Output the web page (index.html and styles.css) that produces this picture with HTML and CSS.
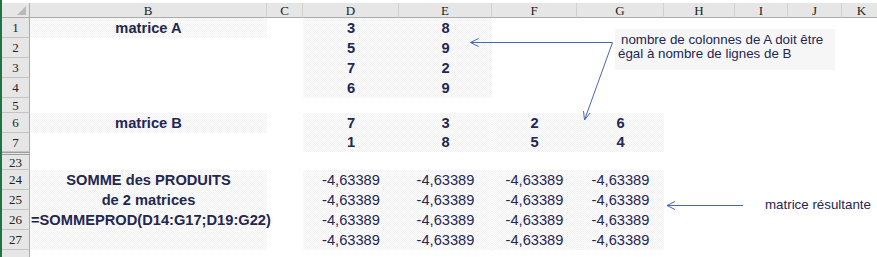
FILE: index.html
```html
<!DOCTYPE html>
<html lang="fr">
<head>
<meta charset="utf-8">
<title>Matrices</title>
<link rel="stylesheet" href="styles.css">
</head>
<body>
<div class="sheet">
  <div class="topstrip"></div>
  <div class="row hdr">
    <div class="corner"><span class="tri"></span></div>
    <div class="ch">B</div><div class="ch">C</div><div class="ch">D</div><div class="ch">E</div><div class="ch">F</div><div class="ch">G</div><div class="ch">H</div><div class="ch">I</div><div class="ch">J</div><div class="ch">K</div>
  </div>

  <div class="row h20">
    <div class="rh">1</div>
    <div class="c p b">matrice A</div><div class="c"></div>
    <div class="c p b">3</div><div class="c p b">8</div>
    <div class="c"></div><div class="c"></div><div class="c"></div><div class="c"></div><div class="c"></div><div class="c"></div>
  </div>
  <div class="row h20">
    <div class="rh">2</div>
    <div class="c"></div><div class="c"></div>
    <div class="c p b">5</div><div class="c p b">9</div>
    <div class="c"></div><div class="c"></div><div class="c"></div><div class="c"></div><div class="c"></div><div class="c"></div>
  </div>
  <div class="row h20">
    <div class="rh">3</div>
    <div class="c"></div><div class="c"></div>
    <div class="c p b">7</div><div class="c p b">2</div>
    <div class="c"></div><div class="c"></div><div class="c"></div><div class="c"></div><div class="c"></div><div class="c"></div>
  </div>
  <div class="row h20">
    <div class="rh">4</div>
    <div class="c"></div><div class="c"></div>
    <div class="c p b">6</div><div class="c p b">9</div>
    <div class="c"></div><div class="c"></div><div class="c"></div><div class="c"></div><div class="c"></div><div class="c"></div>
  </div>
  <div class="row h15">
    <div class="rh">5</div>
    <div class="c"></div><div class="c"></div><div class="c"></div><div class="c"></div><div class="c"></div><div class="c"></div><div class="c"></div><div class="c"></div><div class="c"></div><div class="c"></div>
  </div>
  <div class="row h20">
    <div class="rh">6</div>
    <div class="c p b">matrice B</div><div class="c"></div>
    <div class="c p b">7</div><div class="c p b">3</div><div class="c p b">2</div><div class="c p b">6</div>
    <div class="c"></div><div class="c"></div><div class="c"></div><div class="c"></div>
  </div>
  <div class="row h19">
    <div class="rh">7</div>
    <div class="c"></div><div class="c"></div>
    <div class="c p b">1</div><div class="c p b">8</div><div class="c p b">5</div><div class="c p b">4</div>
    <div class="c"></div><div class="c"></div><div class="c"></div><div class="c"></div>
  </div>
  <div class="row hidden-gap">
    <div class="rh"></div>
  </div>
  <div class="row h15">
    <div class="rh">23</div>
    <div class="c"></div><div class="c"></div><div class="c"></div><div class="c"></div><div class="c"></div><div class="c"></div><div class="c"></div><div class="c"></div><div class="c"></div><div class="c"></div>
  </div>
  <div class="row h20">
    <div class="rh">24</div>
    <div class="c p b">SOMME des PRODUITS</div><div class="c"></div>
    <div class="c p">-4,63389</div><div class="c p">-4,63389</div><div class="c p">-4,63389</div><div class="c p">-4,63389</div>
    <div class="c"></div><div class="c"></div><div class="c"></div><div class="c"></div>
  </div>
  <div class="row h20">
    <div class="rh">25</div>
    <div class="c p b">de 2 matrices</div><div class="c"></div>
    <div class="c p">-4,63389</div><div class="c p">-4,63389</div><div class="c p">-4,63389</div><div class="c p">-4,63389</div>
    <div class="c"></div><div class="c"></div><div class="c"></div><div class="c"></div>
  </div>
  <div class="row h20">
    <div class="rh">26</div>
    <div class="c p b left">=SOMMEPROD(D14:G17;D19:G22)</div><div class="c"></div>
    <div class="c p">-4,63389</div><div class="c p">-4,63389</div><div class="c p">-4,63389</div><div class="c p">-4,63389</div>
    <div class="c"></div><div class="c"></div><div class="c"></div><div class="c"></div>
  </div>
  <div class="row h20">
    <div class="rh">27</div>
    <div class="c p"></div><div class="c"></div>
    <div class="c p">-4,63389</div><div class="c p">-4,63389</div><div class="c p">-4,63389</div><div class="c p">-4,63389</div>
    <div class="c"></div><div class="c"></div><div class="c"></div><div class="c"></div>
  </div>
  <div class="row h20">
    <div class="rh"></div>
    <div class="c"></div><div class="c"></div><div class="c"></div><div class="c"></div><div class="c"></div><div class="c"></div><div class="c"></div><div class="c"></div><div class="c"></div><div class="c"></div>
  </div>

  <div class="note note-top"><span class="first">nombre de colonnes de A doit être</span><br>égal à nombre de lignes de B</div>
  <div class="note note-res">matrice résultante</div>

  <svg class="arrows" width="877" height="257" viewBox="0 0 877 257" xmlns="http://www.w3.org/2000/svg">
    <g fill="none" stroke="#4a67b0" stroke-width="1">
      <polyline points="612.5,42.5 470.5,42.5"/>
      <polyline points="478.5,38.5 470.5,42.5 478.5,46.5"/>
      <polyline points="612.5,42.5 584.5,120"/>
      <polyline points="590,113 584.5,120 583.5,111"/>
      <polyline points="743,205.5 667,205.5"/>
      <polyline points="675,201.5 667,205.5 675,209.5"/>
    </g>
  </svg>
</div>
</body>
</html>
```

FILE: styles.css
```css
html, body {
  margin: 0;
  padding: 0;
  background: #ffffff;
  overflow: hidden;
}

.sheet {
  position: relative;
  width: 877px;
  height: 257px;
  overflow: hidden;
  border-left: 2px solid #217346;
  box-sizing: border-box;
  font-family: "Liberation Sans", Arial, sans-serif;
  color: #232652;
}

.topstrip {
  height: 3px;
  background: #ffffff;
}

.row {
  display: grid;
  grid-template-columns: 28px 237px 36px 96px 93px 85px 87px 71px 53px 54px 40px;
}

.hdr {
  height: 15px;
}

.corner {
  position: relative;
  background: #e6e6e6;
  border-right: 1px solid #ababab;
  border-bottom: 1px solid #ababab;
  box-sizing: border-box;
}

.tri {
  position: absolute;
  right: 3px;
  bottom: 2px;
  width: 0;
  height: 0;
  border-left: 9px solid transparent;
  border-bottom: 9px solid #b9b9b9;
}

.ch {
  background: #e6e6e6;
  border-right: 1px solid #d0d0d0;
  border-bottom: 1px solid #ababab;
  box-sizing: border-box;
  display: flex;
  align-items: center;
  justify-content: center;
  font-family: "Liberation Serif", "Times New Roman", serif;
  font-size: 13px;
  color: #222222;
  line-height: 1;
}

.rh {
  background: #e6e6e6;
  border-right: 1px solid #ababab;
  border-bottom: 1px solid #c4c4c4;
  box-sizing: border-box;
  display: flex;
  align-items: center;
  justify-content: center;
  font-family: "Liberation Serif", "Times New Roman", serif;
  font-size: 13px;
  color: #222222;
  line-height: 1;
}

.h20 { height: 20px; }
.h19 { height: 19px; }
.h15 { height: 15px; }

.hidden-gap {
  height: 3px;
}
.hidden-gap .rh {
  border-bottom: 1px solid #9e9e9e;
  border-top: 1px solid #9e9e9e;
  background: #e6e6e6;
}

.c {
  display: flex;
  align-items: center;
  justify-content: center;
  white-space: nowrap;
  font-size: 14.67px;
  line-height: 1;
  overflow: visible;
  position: relative;
}

.p {
  background: repeating-conic-gradient(#f1f1f1 0 25%, #ffffff 0 50%) 0 0 / 2px 2px;
}

.b {
  font-weight: bold;
}

.left {
  justify-content: flex-start;
  padding-left: 1px;
  z-index: 1;
}

.note {
  position: absolute;
  font-size: 13.33px;
  color: #232652;
  white-space: nowrap;
}

.note-top {
  left: 613px;
  top: 29px;
  width: 220px;
  height: 41px;
  box-sizing: border-box;
  padding: 4px 3px 0 3px;
  line-height: 14px;
  background: #f6f6f7;
}

.note-top .first {
  padding-left: 3px;
}

.note-res {
  left: 763px;
  top: 197px;
  line-height: 16px;
}

.arrows {
  position: absolute;
  left: -2px;
  top: 0;
  pointer-events: none;
  z-index: 2;
}
```
